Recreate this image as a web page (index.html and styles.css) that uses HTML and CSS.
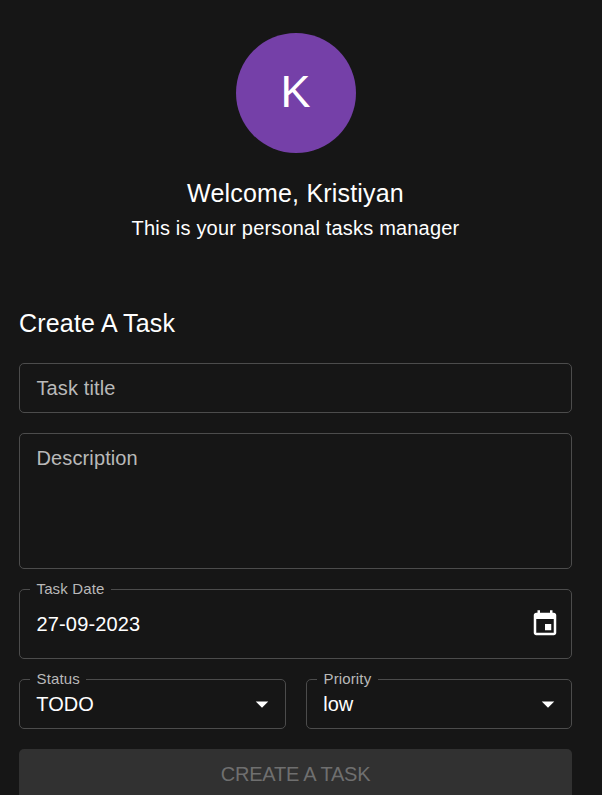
FILE: index.html
```html
<!DOCTYPE html>
<html lang="en">
<head>
<meta charset="utf-8">
<title>Tasks manager</title>
<link rel="stylesheet" href="styles.css">
</head>
<body>
<aside class="sidebar">
  <header class="profile">
    <div class="avatar"><span>K</span></div>
    <h1 class="heading">Welcome, Kristiyan</h1>
    <p class="subtitle">This is your personal tasks manager</p>
  </header>
  <form class="form">
    <h2 class="heading form-title">Create A Task</h2>
    <div class="field"><span class="placeholder">Task title</span></div>
    <div class="field field-area"><span class="placeholder">Description</span></div>
    <div class="field field-date">
      <label class="label">Task Date</label>
      <span class="value">27-09-2023</span>
      <svg class="icon" viewBox="0 0 24 24"><path d="M17 12h-5v5h5v-5zM16 1v2H8V1H6v2H5c-1.11 0-1.99.9-1.99 2L3 19c0 1.1.89 2 2 2h14c1.1 0 2-.9 2-2V5c0-1.1-.9-2-2-2h-1V1h-2zm3 18H5V8h14v11z"/></svg>
    </div>
    <div class="row">
      <div class="field field-select">
        <label class="label">Status</label>
        <span class="value">TODO</span>
        <svg class="icon" viewBox="0 0 24 24"><path d="M7 10l5 5 5-5z"/></svg>
      </div>
      <div class="field field-select">
        <label class="label">Priority</label>
        <span class="value">low</span>
        <svg class="icon" viewBox="0 0 24 24"><path d="M7 10l5 5 5-5z"/></svg>
      </div>
    </div>
    <button class="submit" type="button" disabled>CREATE A TASK</button>
  </form>
</aside>
</body>
</html>
```
FILE: styles.css
```css
* { box-sizing: border-box; }
body {
  margin: 0;
  height: 795px;
  overflow: hidden;
  background: #161616;
  color: #fff;
  font-family: "Liberation Sans", Arial, sans-serif;
  font-size: 20px;
}
.sidebar { padding: 33px 30px 0 19px; }
.profile {
  display: flex;
  flex-direction: column;
  align-items: center;
}
.avatar {
  display: flex;
  align-items: center;
  justify-content: center;
  width: 120px;
  height: 120px;
  padding-bottom: 3px;
  border-radius: 50%;
  background: #7540a8;
  font-size: 45px;
  line-height: 1;
}
.heading {
  margin: 0;
  font-size: 25px;
  font-weight: 400;
  line-height: 40px;
  letter-spacing: 0.0075em;
}
.profile .heading { margin-top: 20px; }
.subtitle {
  margin: 0;
  line-height: 30px;
  letter-spacing: 0.00938em;
}
.form {
  display: flex;
  flex-direction: column;
  gap: 20px;
  margin-top: 60px;
}
.form-title { align-self: flex-start; }
.field {
  position: relative;
  display: flex;
  align-items: center;
  justify-content: space-between;
  height: 50px;
  padding: 0 11px 0 16.5px;
  border: 1px solid #4c4c4c;
  border-radius: 5px;
}
.field-area {
  align-items: flex-start;
  height: 136px;
  padding-top: 12px;
}
.field-date { height: 70px; }
.field-date .value { letter-spacing: 0.15px; }
.field-select { padding-right: 8px; padding-left: 16.3px; }
.placeholder { color: #b9b9b9; letter-spacing: 0.006em; }
.placeholder, .value { line-height: 24px; }
.label {
  position: absolute;
  top: -10px;
  left: 10px;
  padding: 0 6.5px;
  background: #161616;
  color: #b9b9b9;
  font-size: 15px;
  line-height: 18px;
  letter-spacing: 0.00938em;
}
.icon { width: 30px; height: 30px; fill: #fff; }
.row {
  display: grid;
  grid-template-columns: 267px 266px;
  gap: 20px;
}
.submit {
  height: 50px;
  padding: 0;
  border: 0;
  border-radius: 5px;
  background: #313131;
  color: #6f6f6f;
  font: inherit;
  letter-spacing: -0.01em;
}
```
